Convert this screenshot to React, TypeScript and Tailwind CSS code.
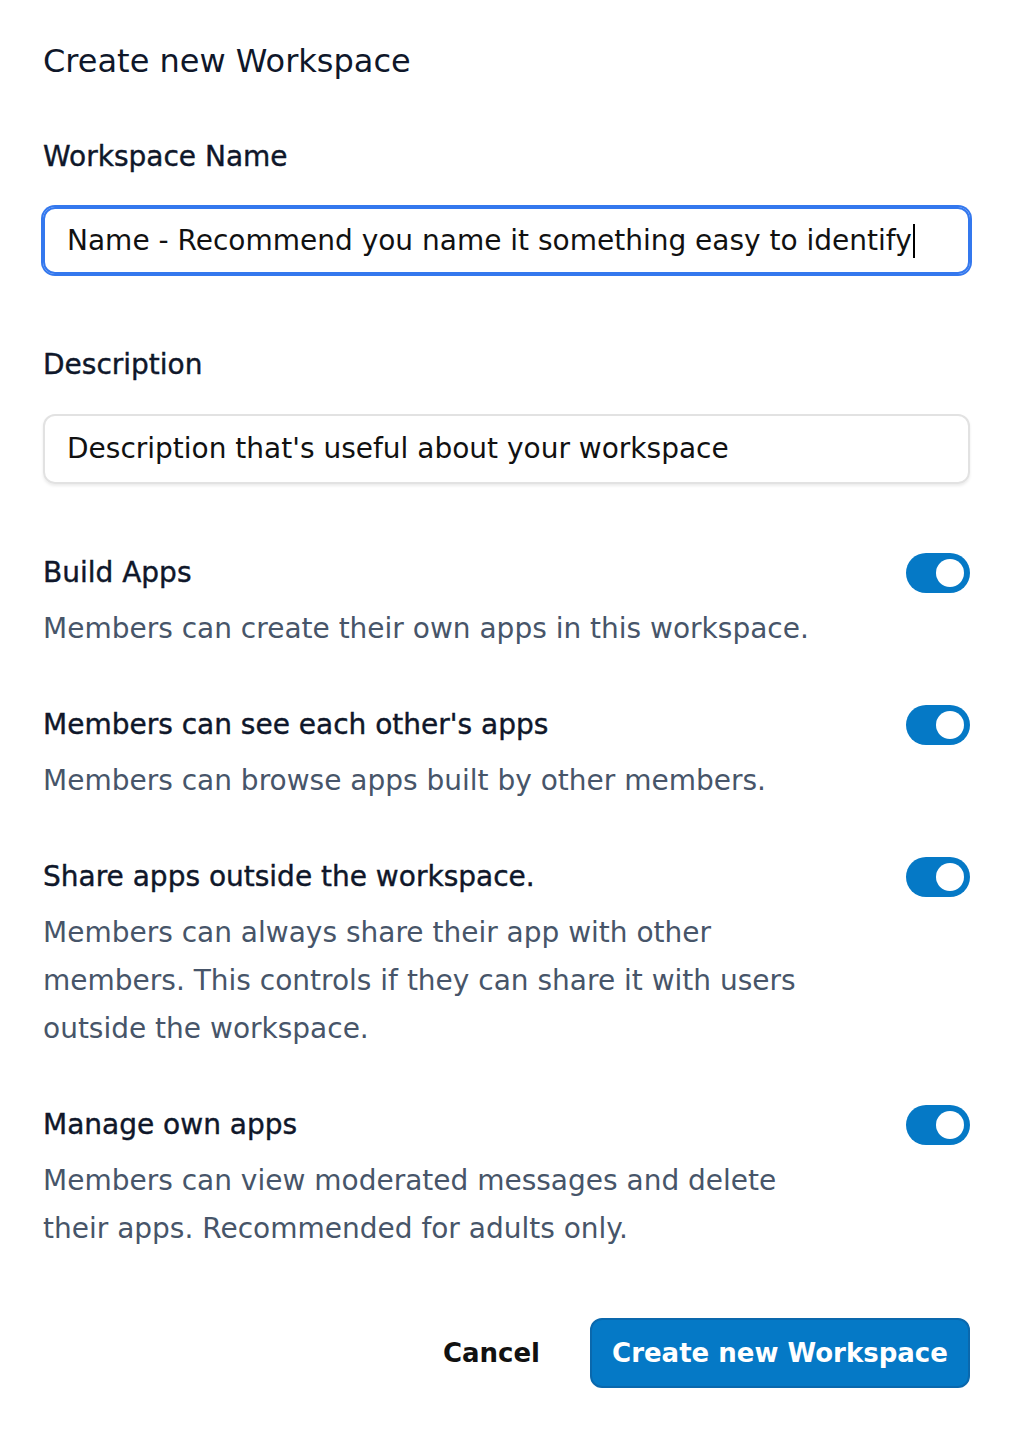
import React from 'react';

interface SettingRowProps {
  title: string;
  lines: string[];
}

function Toggle(): React.ReactElement {
  return (
    <div className="flex h-[40px] w-[64px] shrink-0 items-center justify-end rounded-full bg-[#0579c6] pr-[6px]">
      <div className="h-[28px] w-[28px] rounded-full bg-white" />
    </div>
  );
}

function SettingRow({ title, lines }: SettingRowProps): React.ReactElement {
  return (
    <div>
      <div className="flex h-[40px] items-center justify-between">
        <span className="text-[28px] text-[#0f172a] [-webkit-text-stroke:0.4px]">{title}</span>
        <Toggle />
      </div>
      <div className="mt-[12px] text-[28px] leading-[48px] text-[#475569]">
        {lines.map((line) => (
          <div key={line}>{line}</div>
        ))}
      </div>
    </div>
  );
}

const settings: SettingRowProps[] = [
  { title: 'Build Apps', lines: ['Members can create their own apps in this workspace.'] },
  { title: "Members can see each other's apps", lines: ['Members can browse apps built by other members.'] },
  {
    title: 'Share apps outside the workspace.',
    lines: [
      'Members can always share their app with other',
      'members. This controls if they can share it with users',
      'outside the workspace.',
    ],
  },
  {
    title: 'Manage own apps',
    lines: ['Members can view moderated messages and delete', 'their apps. Recommended for adults only.'],
  },
];

export default function App(): React.ReactElement {
  return (
    <div
      className="min-h-[1432px] w-[1016px] bg-white pl-[43px] pr-[46px] pt-[37px]"
      style={{ fontFamily: '"DejaVu Sans", sans-serif' }}
    >
      <h1 className="text-[32px] leading-[48px] text-[#0f172a]">Create new Workspace</h1>

      <div className="mt-[52px] flex h-[40px] items-center text-[28px] text-[#0f172a] [-webkit-text-stroke:0.4px]">
        Workspace Name
      </div>
      <div className="mt-[30px] flex h-[67px] items-center rounded-[12px] border-2 border-[#3478ee] px-[22px] ring-2 ring-[#3478ee]">
        <span className="text-[28px] text-[#111]">Name - Recommend you name it something easy to identify</span>
        <span className="ml-px h-[34px] w-[2px] bg-black" />
      </div>

      <div className="mt-[71px] flex h-[40px] items-center text-[28px] text-[#0f172a] [-webkit-text-stroke:0.4px]">
        Description
      </div>
      <div className="mt-[29px] flex h-[70px] items-center rounded-[12px] border-2 border-[#e2e2e2] px-[22px] shadow-[0_2px_3px_rgba(0,0,0,0.08)]">
        <span className="text-[28px] text-[#111]">Description that's useful about your workspace</span>
      </div>

      <div className="mt-[69px] flex flex-col gap-[52px]">
        {settings.map((s) => (
          <SettingRow key={s.title} title={s.title} lines={s.lines} />
        ))}
      </div>

      <div className="mt-[65px] flex items-center justify-end gap-[50px]">
        <button className="text-[26px] font-bold text-[#111]">Cancel</button>
        <button className="h-[70px] w-[380px] rounded-[12px] border-2 border-[#0a68ad] bg-[#0579c6] text-[26px] font-bold text-white">
          Create new Workspace
        </button>
      </div>
    </div>
  );
}
